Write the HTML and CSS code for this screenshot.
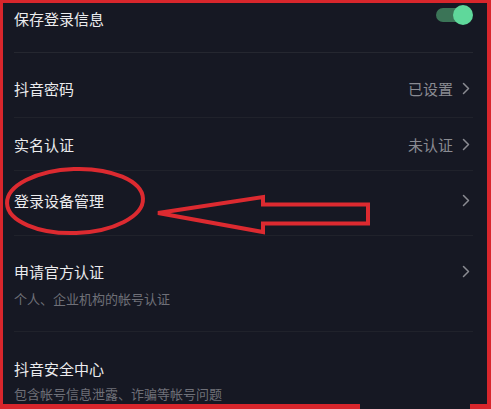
FILE: index.html
```html
<!DOCTYPE html>
<html lang="zh-CN">
<head>
<meta charset="utf-8">
<title>账号与安全</title>
<link rel="stylesheet" href="styles.css">
</head>
<body>
<div class="frame">
  <ul class="list">
    <li class="row row-1">
      <span class="title">保存登录信息</span>
      <span class="toggle"><span class="track"></span><span class="knob"></span></span>
    </li>
    <li class="row row-2">
      <span class="title">抖音密码</span>
      <span class="value">已设置<svg class="chev" viewBox="0 0 8 13" width="8" height="13"><polyline points="1.5,1.5 6.5,6.5 1.5,11.5"/></svg></span>
    </li>
    <li class="row row-3">
      <span class="title">实名认证</span>
      <span class="value">未认证<svg class="chev" viewBox="0 0 8 13" width="8" height="13"><polyline points="1.5,1.5 6.5,6.5 1.5,11.5"/></svg></span>
    </li>
    <li class="row row-4">
      <span class="title">登录设备管理</span>
      <span class="value"><svg class="chev" viewBox="0 0 8 13" width="8" height="13"><polyline points="1.5,1.5 6.5,6.5 1.5,11.5"/></svg></span>
    </li>
    <li class="row row-5 stacked">
      <div class="line">
        <span class="title">申请官方认证</span>
        <span class="value"><svg class="chev" viewBox="0 0 8 13" width="8" height="13"><polyline points="1.5,1.5 6.5,6.5 1.5,11.5"/></svg></span>
      </div>
      <div class="sub">个人、企业机构的帐号认证</div>
    </li>
    <li class="row row-6 stacked">
      <div class="line">
        <span class="title">抖音安全中心</span>
      </div>
      <div class="sub">包含帐号信息泄露、诈骗等帐号问题</div>
    </li>
  </ul>
  <div class="bottom-edge"><span class="seg-red a"></span><span class="seg-gap"></span><span class="seg-red b"></span></div>
  <svg class="marks" viewBox="0 0 491 409" width="491" height="409">
    <ellipse cx="75" cy="201" rx="68" ry="32" transform="rotate(-2 75 201)"/>
    <polygon points="158,213 263,197 263,204.5 368,204.5 368,223.5 263,223.5 263,232"/>
  </svg>
</div>
</body>
</html>
```

FILE: styles.css
```css
* { box-sizing: border-box; }

html, body {
  margin: 0;
  padding: 0;
  background: #161823;
}

body {
  font-family: "Noto Sans CJK SC", "Noto Sans", sans-serif;
  color: #e7e7e9;
}

.frame {
  position: relative;
  width: 491px;
  height: 409px;
  border-top: 3px solid #d8262c;
  border-left: 3px solid #d8262c;
  border-right: 4px solid #d8262c;
  background: #161823;
  display: flex;
  flex-direction: column;
  overflow: hidden;
}

.list {
  list-style: none;
  margin: 0;
  padding: 0 14px 0 11px;
  flex: 0 0 401px;
  display: flex;
  flex-direction: column;
}

.row {
  display: flex;
  align-items: center;
  justify-content: space-between;
  border-bottom: 1px solid #20222b;
}

.title {
  font-size: 15px;
  line-height: 21px;
  color: #ececee;
}

.value {
  display: flex;
  align-items: center;
  gap: 9px;
  font-size: 15px;
  line-height: 21px;
  color: #8a8b92;
  margin-right: 3px;
}

.chev {
  display: block;
  fill: none;
  stroke: #8a8b92;
  stroke-width: 1.5;
  stroke-linecap: round;
  stroke-linejoin: round;
}

.row-1 {
  height: 50px;
  align-items: flex-start;
  padding-top: 5px;
  border-bottom-color: #252730;
}

.row-2 { height: 65px; padding-top: 7px; }
.row-3 { height: 53px; padding-top: 1px; }
.row-4 { height: 65px; padding-bottom: 5px; }

.stacked {
  flex-direction: column;
  align-items: stretch;
  justify-content: flex-start;
}

.row-5 { height: 96px; padding-top: 25px; }
.row-6 { height: 72px; padding-top: 26px; border-bottom: none; }

.line {
  display: flex;
  align-items: center;
  justify-content: space-between;
  height: 21px;
}

.sub {
  font-size: 13px;
  line-height: 18px;
  color: #6f7078;
}

.row-5 .sub { margin-top: 8px; }
.row-6 .sub { margin-top: 6px; }

.toggle {
  position: relative;
  width: 37px;
  height: 20px;
  margin-top: -3px;
}

.track {
  position: absolute;
  left: 0;
  top: 3px;
  width: 32px;
  height: 14px;
  border-radius: 7px;
  background: #3b7457;
}

.knob {
  position: absolute;
  right: 0;
  top: 0;
  width: 20px;
  height: 20px;
  border-radius: 50%;
  background: #5fd89b;
}

.bottom-edge {
  flex: 0 0 5px;
  display: flex;
}

.seg-red { background: #d8262c; }
.seg-red.a { width: 357px; }
.seg-gap { width: 110px; background: #161823; }
.seg-red.b { flex: 1; }

.marks {
  position: absolute;
  left: -3px;
  top: -3px;
  pointer-events: none;
  fill: none;
  stroke: #dc2a30;
  stroke-width: 4;
  stroke-linejoin: miter;
}
```
